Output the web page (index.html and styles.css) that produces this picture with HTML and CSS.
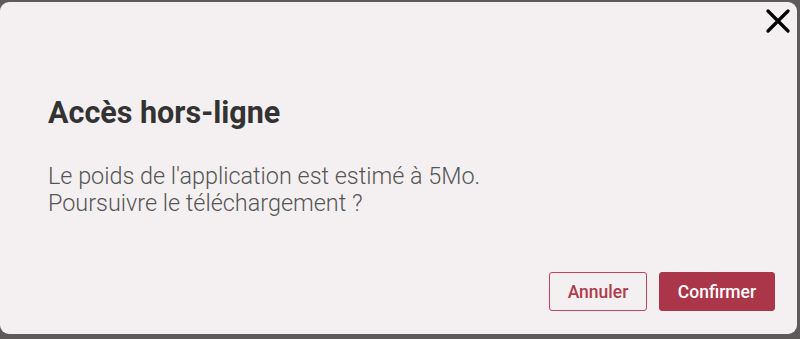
FILE: index.html
```html
<!DOCTYPE html>
<html lang="fr">
  <head>
    <meta charset="UTF-8" />
    <title>Accès hors-ligne</title>
    <link rel="stylesheet" href="styles.css">
  </head>
  <body>
    <div class="dialog">
      <button class="close" aria-label="Fermer">
        <svg viewBox="0 0 24 24" width="24" height="24">
          <path d="M2 2 L22 22 M22 2 L2 22" stroke="#000" stroke-width="3.2" stroke-linecap="round" fill="none"/>
        </svg>
      </button>
      <h2 class="title">Accès hors-ligne</h2>
      <p class="message">Le poids de l'application est estimé à 5Mo.<br>Poursuivre le téléchargement ?</p>
      <div class="actions">
        <button class="btn btn-outline">Annuler</button>
        <button class="btn btn-primary">Confirmer</button>
      </div>
    </div>
  </body>
</html>
```

FILE: styles.css
```css
* {
  box-sizing: border-box;
}

html, body {
  margin: 0;
  height: 100%;
}

body {
  background: #5e5a59;
  font-family: Roboto, 'Liberation Sans', sans-serif;
  padding-top: 2px;
  overflow: hidden;
}

.dialog {
  position: relative;
  width: 797px;
  height: 332px;
  background: #f4f0f1;
  border-radius: 9px;
  padding: 0 22px 0 48px;
  display: flex;
  flex-direction: column;
}

.close {
  position: absolute;
  top: 6px;
  right: 6px;
  width: 26px;
  height: 26px;
  padding: 0;
  border: 0;
  background: none;
  display: flex;
  align-items: center;
  justify-content: center;
}

.title {
  margin: 92.5px 0 0 0;
  font-size: 30.5px;
  font-weight: 700;
  color: #333;
  line-height: 36px;
}

.message {
  margin: 32.5px 0 0 0;
  font-size: 23.4px;
  font-weight: 300;
  color: #555;
  line-height: 27px;
}

.actions {
  margin-top: auto;
  margin-bottom: 23px;
  display: flex;
  justify-content: flex-end;
  gap: 12px;
}

.btn {
  height: 39px;
  padding: 0;
  border-radius: 3px;
  font-family: Roboto, 'Liberation Sans', sans-serif;
  font-size: 17.5px;
  font-weight: 500;
  cursor: pointer;
}

.btn-outline {
  width: 98px;
  background: transparent;
  border: 1px solid #c0475b;
  color: #b03a4e;
}

.btn-primary {
  width: 116px;
  background: #ab3549;
  border: 1px solid #ab3549;
  color: #fff;
}
```
